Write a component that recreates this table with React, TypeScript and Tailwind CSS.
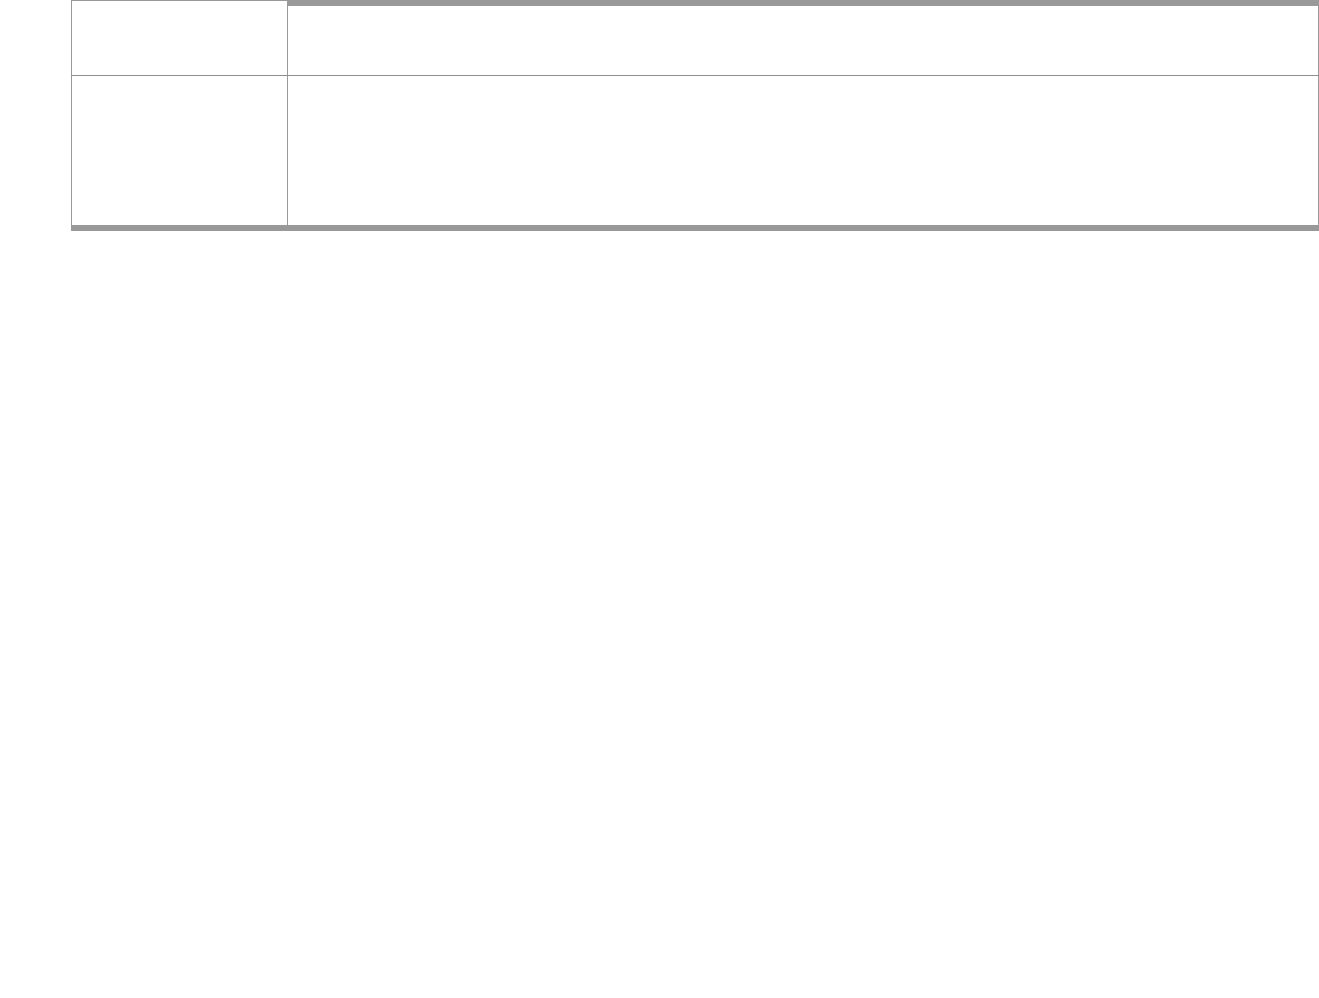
export default function App() {
  return (
    <div className="min-h-screen bg-white">
      <div className="ml-[71px] w-[1248px]">
        {/* top row */}
        <div className="flex h-[76px] border-b border-[#8e8e8e]">
          <div className="w-[217px] border-t border-l border-r border-[#999999]" />
          <div className="flex-1 border-t-[6px] border-r border-[#999999]" />
        </div>
        {/* second row */}
        <div className="flex h-[149px]">
          <div className="w-[217px] border-l border-r border-[#999999]" />
          <div className="flex-1 border-r border-[#999999]" />
        </div>
        <div className="h-[6px] bg-[#999999]" />
      </div>
    </div>
  )
}
